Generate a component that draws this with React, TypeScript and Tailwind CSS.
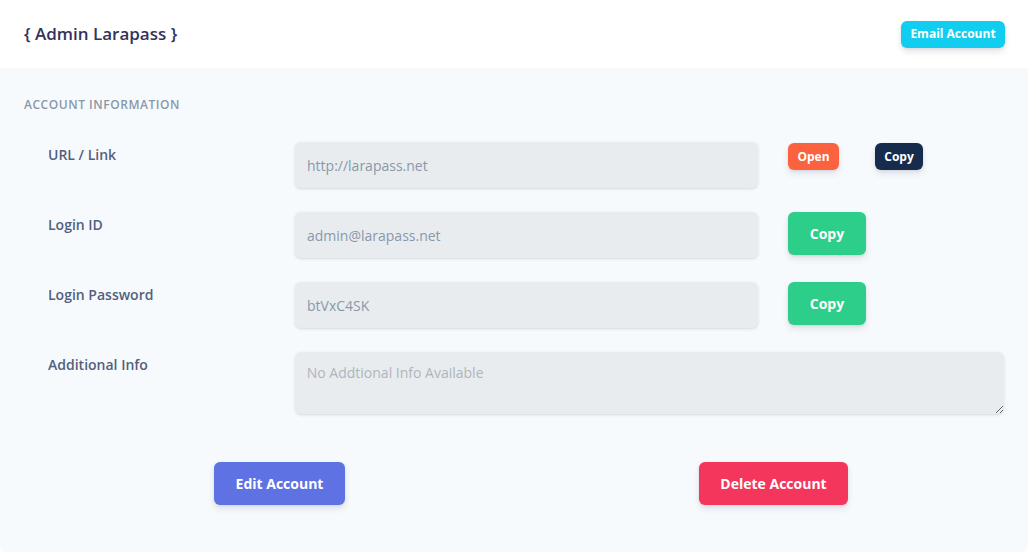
import React from "react";

const font = { fontFamily: '"Open Sans", "Liberation Sans", sans-serif' };

const btnShadow = "shadow-[0_4px_6px_rgba(50,50,93,0.11),0_1px_3px_rgba(0,0,0,0.08)]";
const inputShadow = "shadow-[0_1px_3px_rgba(50,50,93,0.15),0_1px_0_rgba(0,0,0,0.02)]";

function Field({ label, value, children }: { label: string; value: string; children: React.ReactNode }) {
  return (
    <div className="flex items-start mb-6">
      <label className="w-[271px] pl-6 pt-[2px] text-sm leading-[21px] font-semibold text-[#525f7f]">{label}</label>
      <input
        readOnly
        value={value}
        className={`w-[463px] h-[46px] rounded-md bg-[#e9ecef] px-3 text-sm text-[#8898aa] outline-none ${inputShadow}`}
      />
      <div className="ml-[30px] flex items-start">{children}</div>
    </div>
  );
}

function CopyButton() {
  return (
    <button className={`w-[78px] h-[43px] rounded-md bg-[#2dce89] text-sm font-bold text-white ${btnShadow}`}>
      Copy
    </button>
  );
}

export default function App() {
  return (
    <div className="w-[1030px] h-[553px] bg-white" style={font}>
      <div className="w-[1028px] h-[552px] rounded-b-md overflow-hidden bg-[#f7fafc]">
        <div className="h-[68px] bg-white flex items-center justify-between pl-6 pr-[23px]">
          <h3 className="text-[17px] font-semibold text-[#32325d] pb-px">{"{ Admin Larapass }"}</h3>
          <button className={`w-[104px] h-[27px] rounded-md bg-[#11cdef] text-xs font-bold text-white ${btnShadow}`}>
            Email Account
          </button>
        </div>
        <div className="px-6 pt-6">
          <h6 className="pt-px text-xs leading-6 uppercase font-semibold tracking-[0.045em] text-[#8898aa]">Account Information</h6>
          <div className="mt-[25px]">
            <Field label="URL / Link" value="http://larapass.net">
              <button className={`mt-px w-[51px] h-[27px] rounded-md bg-[#fb6340] text-xs font-bold text-white ${btnShadow}`}>
                Open
              </button>
              <button className={`mt-px ml-[36px] w-[48px] h-[27px] rounded-md bg-[#172b4d] text-xs font-bold text-white ${btnShadow}`}>
                Copy
              </button>
            </Field>
            <Field label="Login ID" value="admin@larapass.net">
              <CopyButton />
            </Field>
            <Field label="Login Password" value="btVxC4SK">
              <CopyButton />
            </Field>
            <div className="flex items-start">
              <label className="w-[271px] pl-6 pt-[2px] text-sm leading-[21px] font-semibold text-[#525f7f]">Additional Info</label>
              <textarea
                readOnly
                placeholder="No Addtional Info Available"
                className={`w-[710px] h-[62px] rounded-md bg-[#e9ecef] px-3 py-[11px] text-sm text-[#8898aa] placeholder:text-[#adb5bd] outline-none ${inputShadow}`}
              />
            </div>
          </div>
          <div className="flex mt-[48px] pl-[190px]">
            <button className={`w-[131px] h-[43px] rounded-md bg-[#5e72e4] text-sm font-bold text-white ${btnShadow}`}>
              Edit Account
            </button>
            <button className={`ml-[354px] w-[149px] h-[43px] rounded-md bg-[#f5365c] text-sm font-bold text-white ${btnShadow}`}>
              Delete Account
            </button>
          </div>
        </div>
      </div>
    </div>
  );
}
